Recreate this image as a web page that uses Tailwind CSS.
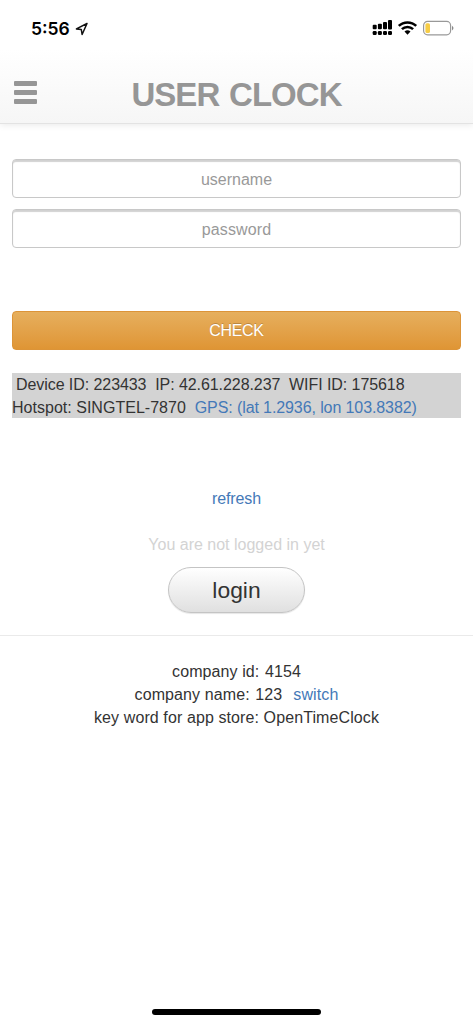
<!DOCTYPE html>
<html lang="en">
<head>
<meta charset="utf-8">
<meta name="viewport" content="width=device-width">
<title>User Clock</title>
<script src="https://cdn.jsdelivr.net/npm/@tailwindcss/browser@4"></script>
</head>
<body class="bg-white">
<div class="relative flex h-[1024px] w-[473px] flex-col overflow-hidden bg-white font-['Liberation_Sans',Arial,sans-serif] text-[16px] leading-[22.86px] text-[#333]">
  <header class="flex h-[124px] shrink-0 flex-col border-b border-[#e3e3e3] bg-linear-to-b from-white from-40% to-[#f6f6f6] shadow-[0_1px_7px_rgba(0,0,0,0.09)]">
    <div class="flex h-[58px] items-center pl-[31px] pr-[19px]">
      <span class="w-[40px] whitespace-nowrap font-['Inter',sans-serif] text-[17.5px] font-semibold leading-[22px] text-black">5:56</span>
      <svg class="ml-[4px]" width="14" height="14" viewBox="0 0 14 14" fill="none" stroke="#111" stroke-width="1.5" stroke-linejoin="round"><path d="M12 1.5 1.4 6.9 6.3 7.5 7.1 12.5Z"/></svg>
      <svg class="ml-auto" width="82" height="20" viewBox="0 0 82 20">
        <g fill="#000">
          <rect x="0.7" y="5.7" width="4" height="4.5" rx="1"/><rect x="5.9" y="4.7" width="4" height="5.5" rx="1"/><rect x="11" y="3" width="4" height="7.2" rx="1"/><rect x="16" y="1" width="4" height="9.4" rx="1"/>
          <rect x="0.7" y="12" width="4" height="4" rx="1.2"/><rect x="5.9" y="12" width="4" height="4" rx="1.2"/><rect x="11" y="12" width="4" height="4" rx="1.2"/><rect x="16" y="12" width="4" height="4" rx="1.2"/>
        </g>
        <g fill="none" stroke="#000" stroke-width="2.5"><path d="M26.8 6.9a12.5 12.5 0 0 1 17.4 0"/><path d="M29.9 10.2a8 8 0 0 1 11.2 0"/></g>
        <path d="M32.5 12.6a4.6 4.6 0 0 1 6 0L35.5 15.8Z"/>
        <rect x="51.6" y="2.4" width="27" height="13.4" rx="4" fill="#fff" stroke="#999" stroke-width="1.2"/>
        <rect x="53.4" y="4.2" width="4.6" height="9.8" rx="1.6" fill="#f7cd46"/>
        <path d="M80 6.7q3 2.4 0 4.8Z" fill="#888"/>
      </svg>
    </div>
    <div class="grid h-[65px] grid-cols-[25px_1fr_25px] items-start px-[13px]">
      <div class="mt-[23px] flex flex-col gap-[4px] pl-[1px]">
        <span class="h-[5px] w-[23px] rounded-[1px] bg-[#969696]"></span>
        <span class="h-[5px] w-[23px] rounded-[1px] bg-[#969696]"></span>
        <span class="h-[5px] w-[23px] rounded-[1px] bg-[#969696]"></span>
      </div>
      <h1 class="mt-[17px] whitespace-nowrap text-center text-[33px] font-bold leading-[40px] tracking-[-0.95px] [word-spacing:1.5px] text-[#969696]">USER CLOCK</h1>
    </div>
  </header>
  <main class="flex flex-1 flex-col">
    <form class="mt-[35px] flex flex-col gap-[11px] px-[12px]">
      <input type="text" placeholder="username" class="h-[39px] rounded-[4px] border border-[#c8c8c8] bg-white pt-[2px] text-center text-[16px] placeholder:text-[#999] shadow-[inset_0_2px_1px_rgba(0,0,0,0.18)]">
      <input type="password" placeholder="password" class="h-[39px] rounded-[4px] border border-[#c8c8c8] bg-white pt-[2px] text-center text-[16px] tracking-[0.15px] placeholder:text-[#999] shadow-[inset_0_2px_1px_rgba(0,0,0,0.18)]">
      <button type="button" class="mt-[52px] h-[39px] rounded-[4px] border border-[#dc9438] bg-linear-to-b from-[#e6af5d] to-[#df9534] pt-[1px] text-[16px] text-white [text-shadow:0_-1px_0_rgba(0,0,0,0.2)]"><span class="tracking-[-0.3px]">CHECK</span></button>
    </form>
    <section class="mx-[12px] mt-[23px] h-[45px] whitespace-nowrap bg-[#d3d3d3] pt-[1px]">
      <p class="pl-[4px] tracking-[-0.07px]">Device ID: 223433&nbsp; IP: 42.61.228.237&nbsp; WIFI ID: 175618</p>
      <p class="tracking-[-0.05px]"><span class="tracking-[0.02px]">Hotspot: SINGTEL-7870&nbsp; </span><a class="tracking-[-0.1px] text-[#4479b8]">GPS: (lat 1.2936, lon 103.8382)</a></p>
    </section>
    <section class="flex flex-col items-center">
      <a class="mt-[70px] tracking-[-0.1px] text-[#4479b8]">refresh</a>
      <p class="mt-[23px] text-[#d3d3d3]">You are not logged in yet</p>
      <button type="button" class="mt-[10px] h-[46px] w-[137px] rounded-full border border-[#c4c4c4] bg-linear-to-b from-white to-[#e0e0e0] pt-[1px] text-[22.86px] text-[#333] shadow-[0_1px_1px_rgba(0,0,0,0.1)]">login</button>
    </section>
    <footer class="mt-[22px] flex flex-col items-center whitespace-nowrap border-t border-[#eaeaea] pt-[25.3px] tracking-[0.1px]">
      <p>company id: <span class="pl-[1px]">4154</span></p>
      <p>company name: <span class="pl-[1px]">123</span>&nbsp; <a class="pl-[2px] text-[#4479b8]">switch</a></p>
      <p>key word for app store: OpenTimeClock</p>
    </footer>
    <div class="mx-auto mb-[9px] mt-auto h-[6px] w-[169px] rounded-full bg-black"></div>
  </main>
</div>
</body>
</html>
